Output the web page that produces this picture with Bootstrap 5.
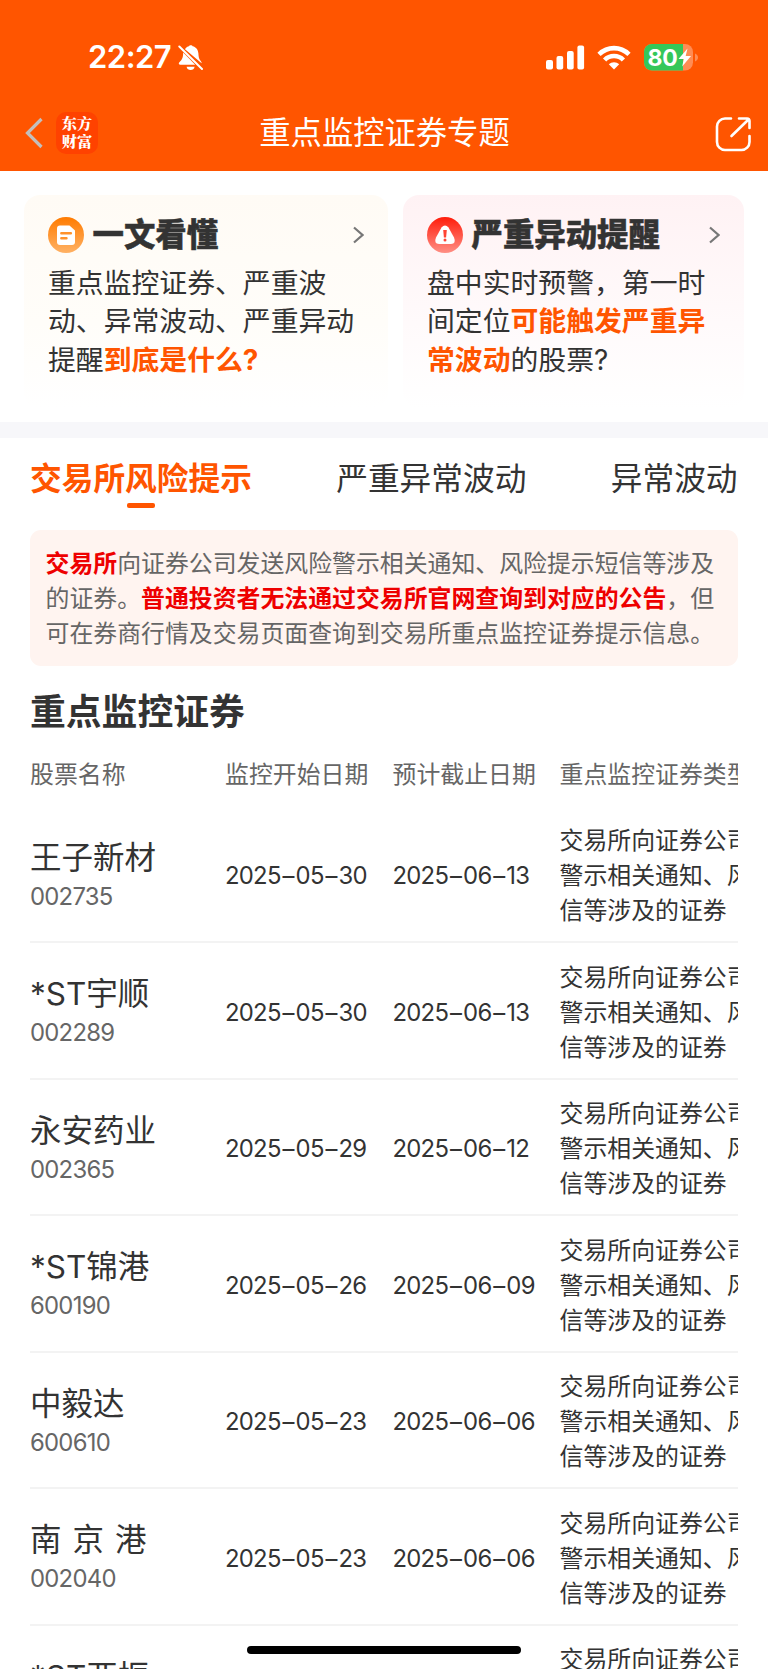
<!DOCTYPE html>
<html lang="zh-CN">
<head>
<meta charset="utf-8">
<meta name="viewport" content="width=device-width, initial-scale=1">
<title>重点监控证券专题</title>
<link rel="stylesheet" href="https://cdn.jsdelivr.net/npm/bootstrap@5.3.0/dist/css/bootstrap.min.css">
<style>
  :root { --brand: #ff5500; --ink: #333; --muted: #666; }
  html, body { height: 1669px; overflow: hidden; }
  body { font-family: Inter, "Noto Sans CJK SC", sans-serif; color: var(--ink); background: #fff; position: relative; }
  svg { display: block; flex: none; }
  .screen { height: 1669px; overflow: hidden; }
  .app-head { background: var(--brand); height: 171px; color: #fff; }
  .status-row { height: 94px; padding: 20px 69.500px 0 88px; }
  .clock { font-size: 31px; font-weight: 600; line-height: 36px; letter-spacing: -.5px; }
  .bell { margin-left: 7px; }
  .wifi { margin-left: 12px; }
  .battery { margin-left: 13px; }
  .title-row { height: 77px; padding: 0 16px 0 24px; }
  .head-side { width: 120px; }
  .page-title { font-size: 31.300px; line-height: 40px; margin-right: 7px; }
  .share { margin-top: 3px; }
  .app-logo { width: 42px; height: 42px; border-radius: 10px; margin-left: 12px; background: #ff4200; font: 900 15.200px/18px "Noto Serif CJK SC", "Noto Sans CJK SC", serif; text-align: center; padding-top: 2px; }
  .promo-row { padding: 24px 24px 0 24px; gap: 15px; height: 251px; }
  .promo { border-radius: 16px; padding: 22px 24px; height: 213px; }
  .promo-guide { width: 364px; background: linear-gradient(#fffbf5, #fffdf9 60%, #fff); }
  .promo-alert { width: 341px; background: linear-gradient(#fff2f4, #fffafb 60%, #fff); }
  .promo-title { font-size: 31.400px; line-height: 36px; font-weight: 900; margin-left: 8.500px; -webkit-text-stroke: .5px var(--ink); }
  .promo-text { font-size: 27.830px; line-height: 38.400px; margin-top: 11px; white-space: nowrap; }
  .promo-text b { color: var(--brand); font-weight: 700; }
  .band { height: 16px; background: #f7f7fa; }
  .tab-row { padding: 18px 30.500px 0 30px; height: 92px; }
  .tab-item { font-size: 31.700px; line-height: 46px; white-space: nowrap; }
  .tab-item.active { color: var(--brand); font-weight: 600; }
  .tab-item.active::after { content: ""; display: block; width: 28px; height: 4.500px; border-radius: 2px; background: var(--brand); margin: 1px auto 0; }
  .notice { margin: 0 30px; height: 136px; border-radius: 11px; background: #fff4f0; padding: 15.500px; color: var(--muted); font-size: 23.880px; line-height: 35px; white-space: nowrap; }
  .notice b { color: #ee0000; }
  .sec-title { font-size: 35.800px; line-height: 46px; font-weight: 700; margin: 23px 30px 0; }
  .grid-wrap { margin: 0 30px; overflow: hidden; font-size: 23.880px; line-height: 35px; }
  .grid-line { display: grid; grid-template-columns: 195px 167.500px 167px 148.500px; align-items: center; white-space: nowrap; overflow: hidden; }
  .grid-head { color: var(--muted); height: 71.500px; padding-top: 8px; }
  .grid-row { height: 136.500px; padding-top: 4px; border-bottom: 2px solid #f3f3f3; }
  .stock { font-size: 31.500px; line-height: 41px; word-spacing: 2.200px; }
  .code { color: var(--muted); line-height: 37px; letter-spacing: -.75px; }
  .num { letter-spacing: -.75px; }
  .num i { font-style: normal; margin: 0 1.850px; }
  .home-bar { position: absolute; left: 247px; top: 1646px; width: 274px; height: 8px; border-radius: 4px; background: #000; }
</style>
</head>
<body>
<div class="screen">
<header class="app-head">
  <div class="status-row d-flex align-items-center">
    <span class="clock">22:27</span>
    <svg class="bell" width="26" height="27" viewBox="0 0 26 27" fill="#fff">
      <path d="M7 5.200C8 3.500 9.400 2.500 11 2.200 11.300.9 14.300.9 14.600 2.200c3.600.7 5.600 3.700 5.800 7.400.2 4.400 1 6 2.800 8.100.4.6.5 1 .4 1.500z"/>
      <path d="M5.200 8.600 17.200 20.800H2.400C.8 20.800.3 19.400 1.400 18.300 4 15.700 5 14.500 5.200 8.600z"/>
      <path d="M8.600 22.800h8c-.5 4.400-7.500 4.400-8 0z"/>
      <path d="M1.300 2.500 24 25" stroke="#fff" stroke-width="2" stroke-linecap="round"/>
    </svg>
    <div class="ms-auto d-flex align-items-center">
      <svg width="39" height="25" viewBox="0 0 39 25" fill="#fff"><rect x="0" y="15" width="7" height="9.500" rx="2"/><rect x="10.500" y="11" width="6.700" height="13.500" rx="2"/><rect x="21" y="6" width="6.700" height="18.500" rx="2"/><rect x="31.400" y="0.500" width="6.700" height="24" rx="2"/></svg>
      <svg class="wifi" width="34" height="25" viewBox="0 0 34 25" fill="none" stroke="#fff" stroke-width="4.600"><path d="M2 9.300C10.500 1 23.500 1 32 9.300"/><path d="M7.600 15C12.800 9.700 21.200 9.700 26.400 15"/><path d="M17 24.500 11.800 19.300c2.800-2.800 7.600-2.800 10.400 0z" fill="#fff" stroke="none"/></svg>
      <svg class="battery" width="55" height="27" viewBox="0 0 55 27"><defs><clipPath id="cell"><rect width="49" height="26.500" rx="8"/></clipPath></defs><g clip-path="url(#cell)"><path fill="#ff8c54" d="M0 0h49v27H0z"/><path fill="#34c759" d="M0 0h39v27H0z"/></g><path d="M51 9.500c4 1.500 4 6.500 0 8z" fill="#ff8c54"/><text x="3.500" y="21.500" font-family="Inter" font-weight="700" font-size="23" letter-spacing="-.2" fill="#fff">80</text><path d="M43.500 4.500 34.500 15h5.300l-1.600 7.500L47 12h-5.300z" fill="#fff"/></svg>
    </div>
  </div>
  <div class="title-row d-flex align-items-center justify-content-between">
    <div class="head-side d-flex align-items-center">
      <svg width="20" height="32" viewBox="0 0 20 32" fill="none" stroke="#c3bfbc" stroke-width="3.200"><path d="M17.500 2 3.500 16 17.500 30"/></svg>
      <div class="app-logo">东方<br>财富</div>
    </div>
    <div class="page-title">重点监控证券专题</div>
    <div class="head-side d-flex justify-content-end">
      <svg class="share" width="38" height="38" viewBox="0 0 38 38" fill="none" stroke="#fff" stroke-width="2.600" stroke-linecap="round" stroke-linejoin="round"><path d="M17 3.500H11A8 8 0 0 0 3 11.500V27a8 8 0 0 0 8 8H27.500a8 8 0 0 0 8-8V21"/><path d="M25 3.500H33a2.500 2.500 0 0 1 2.500 2.500V13M34.500 4.500 17.500 21"/></svg>
    </div>
  </div>
</header>

<section class="promo-row d-flex">
  <div class="promo promo-guide">
    <div class="d-flex align-items-center">
      <svg width="36" height="36" viewBox="0 0 36 36"><defs><linearGradient id="og" x2="0" y2="1"><stop stop-color="#ff7b00"/><stop offset="1" stop-color="#ffb164"/></linearGradient></defs><circle cx="18" cy="18" r="18" fill="url(#og)"/><path d="M12 8.500H21.500L27 13.500V25a3 3 0 0 1-3 3H12a3 3 0 0 1-3-3V11.500a3 3 0 0 1 3-3z" fill="#fff"/><path d="M13.300 16.200h9.600M13.300 21.200h5.200" stroke="#ff922b" stroke-width="2.400" stroke-linecap="round"/></svg>
      <div class="promo-title">一文看懂</div>
      <svg class="ms-auto" width="12" height="18" viewBox="0 0 12 18" fill="none" stroke="#777" stroke-width="2.200"><path d="M2 1.500 10.500 9 2 16.500"/></svg>
    </div>
    <div class="promo-text">重点监控证券、严重波<br>动、异常波动、严重异动<br>提醒<b>到底是什么?</b></div>
  </div>
  <div class="promo promo-alert">
    <div class="d-flex align-items-center">
      <svg width="36" height="36" viewBox="0 0 36 36"><defs><linearGradient id="rg" x2="0" y2="1"><stop stop-color="#ff1c0a"/><stop offset="1" stop-color="#ff8f85"/></linearGradient></defs><circle cx="18" cy="18" r="18" fill="url(#rg)"/><path d="M14.500 10.500Q18 6.500 21.500 10.500L27 20.500Q29.500 26.500 24 27H12Q6.500 26.500 9 20.500z" fill="#fff"/><path d="M16.200 13h3.600l-.7 7.500h-2.200z" fill="#f43"/><circle cx="18" cy="23" r="1.500" fill="#f43"/></svg>
      <div class="promo-title">严重异动提醒</div>
      <svg class="ms-auto" width="12" height="18" viewBox="0 0 12 18" fill="none" stroke="#777" stroke-width="2.200"><path d="M2 1.500 10.500 9 2 16.500"/></svg>
    </div>
    <div class="promo-text">盘中实时预警，第一时<br>间定位<b>可能触发严重异</b><br><b>常波动</b>的股票?</div>
  </div>
</section>
<div class="band"></div>

<nav class="tab-row d-flex justify-content-between">
  <div class="tab-item active">交易所风险提示</div>
  <div class="tab-item">严重异常波动</div>
  <div class="tab-item">异常波动</div>
</nav>

<div class="notice"><b>交易所</b>向证券公司发送风险警示相关通知、风险提示短信等涉及<br>的证券。<b>普通投资者无法通过交易所官网查询到对应的公告</b>，但<br>可在券商行情及交易页面查询到交易所重点监控证券提示信息。</div>

<h2 class="sec-title">重点监控证券</h2>

<main class="grid-wrap">
  <div class="grid-line grid-head"><div>股票名称</div><div>监控开始日期</div><div>预计截止日期</div><div>重点监控证券类型</div></div>
  <div class="grid-line grid-row"><div><div class="stock">王子新材</div><div class="code">002735</div></div><div class="num">2025<i>–</i>05<i>–</i>30</div><div class="num">2025<i>–</i>06<i>–</i>13</div><div>交易所向证券公司<br>警示相关通知、风<br>信等涉及的证券</div></div>
  <div class="grid-line grid-row"><div><div class="stock">*ST宇顺</div><div class="code">002289</div></div><div class="num">2025<i>–</i>05<i>–</i>30</div><div class="num">2025<i>–</i>06<i>–</i>13</div><div>交易所向证券公司<br>警示相关通知、风<br>信等涉及的证券</div></div>
  <div class="grid-line grid-row"><div><div class="stock">永安药业</div><div class="code">002365</div></div><div class="num">2025<i>–</i>05<i>–</i>29</div><div class="num">2025<i>–</i>06<i>–</i>12</div><div>交易所向证券公司<br>警示相关通知、风<br>信等涉及的证券</div></div>
  <div class="grid-line grid-row"><div><div class="stock">*ST锦港</div><div class="code">600190</div></div><div class="num">2025<i>–</i>05<i>–</i>26</div><div class="num">2025<i>–</i>06<i>–</i>09</div><div>交易所向证券公司<br>警示相关通知、风<br>信等涉及的证券</div></div>
  <div class="grid-line grid-row"><div><div class="stock">中毅达</div><div class="code">600610</div></div><div class="num">2025<i>–</i>05<i>–</i>23</div><div class="num">2025<i>–</i>06<i>–</i>06</div><div>交易所向证券公司<br>警示相关通知、风<br>信等涉及的证券</div></div>
  <div class="grid-line grid-row"><div><div class="stock">南&nbsp;京&nbsp;港</div><div class="code">002040</div></div><div class="num">2025<i>–</i>05<i>–</i>23</div><div class="num">2025<i>–</i>06<i>–</i>06</div><div>交易所向证券公司<br>警示相关通知、风<br>信等涉及的证券</div></div>
  <div class="grid-line grid-row"><div><div class="stock">*ST亚振</div><div class="code">&nbsp;</div></div><div></div><div></div><div>交易所向证券公司<br>&nbsp;<br>&nbsp;</div></div>
</main>
</div>
<div class="home-bar"></div>
<script src="https://cdn.jsdelivr.net/npm/bootstrap@5.3.0/dist/js/bootstrap.bundle.min.js"></script>
</body>
</html>
